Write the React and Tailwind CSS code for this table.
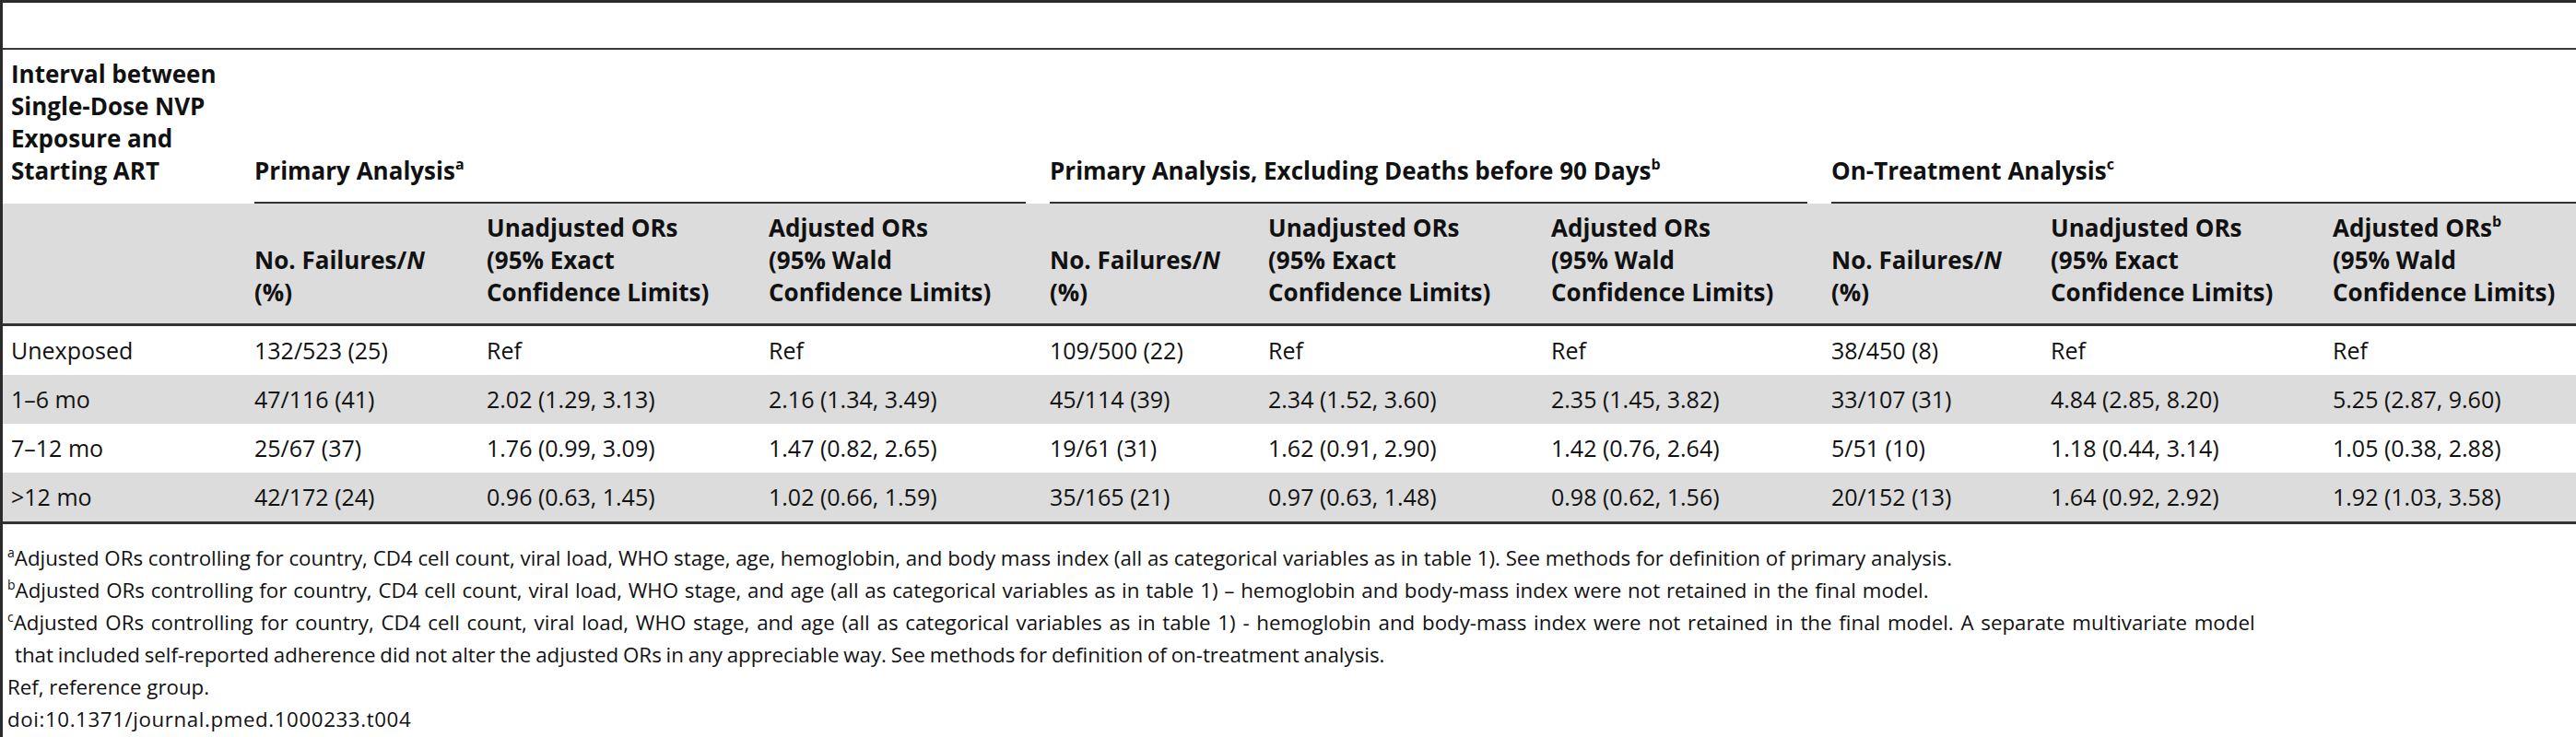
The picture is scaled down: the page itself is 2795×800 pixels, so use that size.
import React from "react";

const COLS =
  "grid grid-cols-[273px_252px_306px_305px_237px_307px_304px_238px_306px_306px]";

function Sup({ children }) {
  return (
    <sup className="text-[16px] top-[-11px] font-bold">{children}</sup>
  );
}

function Group({ children, last }) {
  return (
    <div className="col-span-3 flex flex-col justify-end">
      <div className="whitespace-nowrap leading-[35px]">{children}</div>
      <div
        className={
          last
            ? "mt-[16px] h-[2px] bg-[#333333]"
            : "mt-[16px] h-[2px] bg-[#333333] mr-[26px]"
        }
      />
    </div>
  );
}

function SubHead({ lines }) {
  return (
    <div className="flex flex-col justify-end pb-[16px] leading-[35px] whitespace-nowrap">
      {lines.map((l, i) => (
        <div key={i}>{l}</div>
      ))}
    </div>
  );
}

const NF = [
  <span key="a">
    No. Failures/<i>N</i>
  </span>,
  "(%)",
];
const UN = ["Unadjusted ORs", "(95% Exact", "Confidence Limits)"];
const AD = ["Adjusted ORs", "(95% Wald", "Confidence Limits)"];
const ADB = [
  <span key="b">
    Adjusted ORs<Sup>b</Sup>
  </span>,
  "(95% Wald",
  "Confidence Limits)",
];

const rows = [
  ["Unexposed", "132/523 (25)", "Ref", "Ref", "109/500 (22)", "Ref", "Ref", "38/450 (8)", "Ref", "Ref"],
  ["1–6 mo", "47/116 (41)", "2.02 (1.29, 3.13)", "2.16 (1.34, 3.49)", "45/114 (39)", "2.34 (1.52, 3.60)", "2.35 (1.45, 3.82)", "33/107 (31)", "4.84 (2.85, 8.20)", "5.25 (2.87, 9.60)"],
  ["7–12 mo", "25/67 (37)", "1.76 (0.99, 3.09)", "1.47 (0.82, 2.65)", "19/61 (31)", "1.62 (0.91, 2.90)", "1.42 (0.76, 2.64)", "5/51 (10)", "1.18 (0.44, 3.14)", "1.05 (0.38, 2.88)"],
  [">12 mo", "42/172 (24)", "0.96 (0.63, 1.45)", "1.02 (0.66, 1.59)", "35/165 (21)", "0.97 (0.63, 1.48)", "0.98 (0.62, 1.56)", "20/152 (13)", "1.64 (0.92, 2.92)", "1.92 (1.03, 3.58)"],
];

function FnSup({ children }) {
  return <sup className="text-[14px] top-[-9px]">{children}</sup>;
}

export default function App() {
  return (
    <div
      className="w-[2795px] h-[800px] overflow-hidden bg-white border-l-[3px] border-[#2b2b2b] text-[#111111]"
      style={{ fontFamily: '"Open Sans", "Liberation Sans", sans-serif' }}
    >
      <div className="w-[2900px]">
        <div className="h-[3px] bg-[#2b2b2b]" />
        <div className="h-[49px]" />
        <div className="h-[2px] bg-[#3a3a3a]" />

        {/* Group header row */}
        <div className={`${COLS} h-[167px] font-bold text-[26px]`}>
          <div className="self-end pl-[9px] pb-[18px] leading-[35px] whitespace-nowrap">
            <div>Interval between</div>
            <div>Single-Dose NVP</div>
            <div>Exposure and</div>
            <div>Starting ART</div>
          </div>
          <Group>
            Primary Analysis<Sup>a</Sup>
          </Group>
          <Group>
            Primary Analysis, Excluding Deaths before 90 Days<Sup>b</Sup>
          </Group>
          <Group last>
            On-Treatment Analysis<Sup>c</Sup>
          </Group>
        </div>

        {/* Sub header */}
        <div className={`${COLS} h-[130px] bg-[#dcdcdc] font-bold text-[26px]`}>
          <div />
          <SubHead lines={NF} />
          <SubHead lines={UN} />
          <SubHead lines={AD} />
          <SubHead lines={NF} />
          <SubHead lines={UN} />
          <SubHead lines={AD} />
          <SubHead lines={NF} />
          <SubHead lines={UN} />
          <SubHead lines={ADB} />
        </div>
        <div className="h-[3px] bg-[#333333]" />

        {/* Body rows */}
        {rows.map((r, i) => (
          <div
            key={i}
            className={`${COLS} h-[53px] text-[25px] ${
              i % 2 === 1 ? "bg-[#dcdcdc]" : "bg-white"
            }`}
          >
            {r.map((c, j) => (
              <div
                key={j}
                className={`flex items-center whitespace-nowrap ${
                  j === 0 ? "pl-[9px]" : ""
                }`}
              >
                {c}
              </div>
            ))}
          </div>
        ))}
        <div className="h-[3px] bg-[#333333]" />

        {/* Footnotes */}
        <div className="mt-[19px] pl-[5px] text-[22.3px] leading-[35px] whitespace-nowrap">
          <div>
            <FnSup>a</FnSup>Adjusted ORs controlling for country, CD4 cell count, viral load, WHO stage, age, hemoglobin, and body mass index (all as categorical variables as in table 1). See methods for definition of primary analysis.
          </div>
          <div className="[word-spacing:1px]">
            <FnSup>b</FnSup>Adjusted ORs controlling for country, CD4 cell count, viral load, WHO stage, and age (all as categorical variables as in table 1) – hemoglobin and body-mass index were not retained in the final model.
          </div>
          <div className="[word-spacing:2px]">
            <FnSup>c</FnSup>Adjusted ORs controlling for country, CD4 cell count, viral load, WHO stage, and age (all as categorical variables as in table 1) - hemoglobin and body-mass index were not retained in the final model. A separate multivariate model
          </div>
          <div className="pl-[8px] [word-spacing:-1px]">
            that included self-reported adherence did not alter the adjusted ORs in any appreciable way. See methods for definition of on-treatment analysis.
          </div>
          <div>Ref, reference group.</div>
          <div className="tracking-[0.6px]">doi:10.1371/journal.pmed.1000233.t004</div>
        </div>
      </div>
    </div>
  );
}
